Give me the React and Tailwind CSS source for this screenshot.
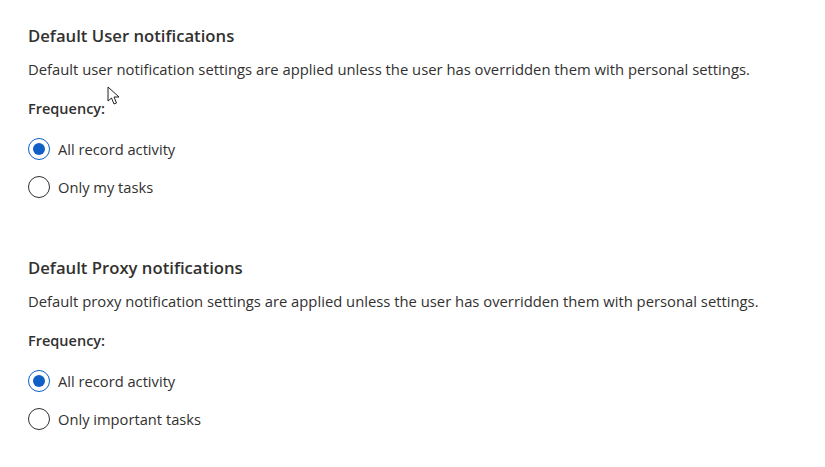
import React from "react";

function Radio({ checked, label }) {
  return (
    <div className="flex items-center gap-[8px] h-[22px]">
      <span
        className={
          "flex items-center justify-center w-[22px] h-[22px] rounded-full border " +
          (checked ? "border-[#0f5fc5]" : "border-[#323130]")
        }
      >
        {checked && <span className="w-[12px] h-[12px] rounded-full bg-[#0f5fc5]" />}
      </span>
      <span className="text-[14.7px] text-[#323130]">{label}</span>
    </div>
  );
}

function Section({ title, desc, options }) {
  return (
    <div className="flex flex-col">
      <div className="h-[24px] flex items-center text-[16.7px] font-semibold text-[#323130]">{title}</div>
      <div className="mt-[11px] h-[20px] flex items-center text-[14.8px] text-[#323130]">{desc}</div>
      <div className="mt-[20px] h-[20px] flex items-center text-[14.5px] font-semibold text-[#323130]">Frequency:</div>
      <div className="mt-[19px] flex flex-col gap-[16px]">
        <Radio checked label={options[0]} />
        <Radio label={options[1]} />
      </div>
    </div>
  );
}

export default function App() {
  return (
    <div
      className="relative w-[825px] h-[467px] bg-white pl-[28px] pt-[24px] flex flex-col gap-[58px]"
      style={{ fontFamily: '"Open Sans", "Noto Sans", sans-serif' }}
    >
      <Section
        title="Default User notifications"
        desc="Default user notification settings are applied unless the user has overridden them with personal settings."
        options={["All record activity", "Only my tasks"]}
      />
      <Section
        title="Default Proxy notifications"
        desc="Default proxy notification settings are applied unless the user has overridden them with personal settings."
        options={["All record activity", "Only important tasks"]}
      />
      <svg className="absolute left-[107px] top-[86px]" width="14" height="20" viewBox="0 0 14 20">
        <path d="M1 1 L1 15 L4.5 12 L7 18 L9.5 17 L7 11 L12 11 Z" fill="white" stroke="#222" strokeWidth="1" strokeLinejoin="round" />
      </svg>
    </div>
  );
}
